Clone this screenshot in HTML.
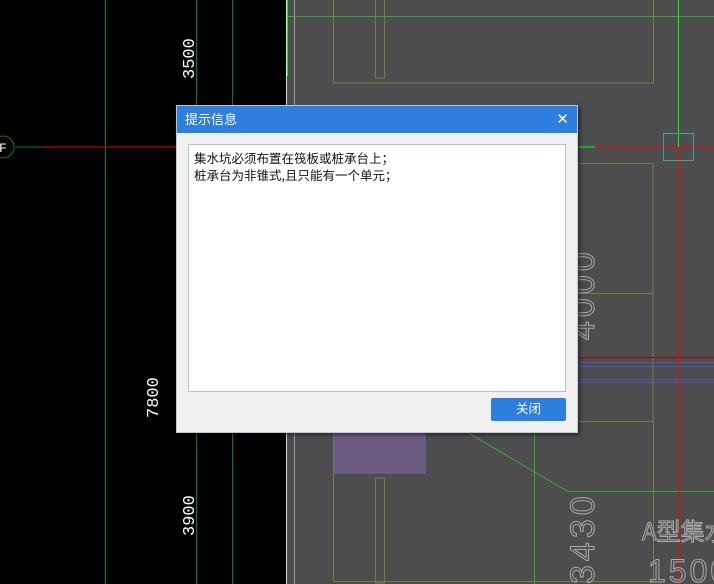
<!DOCTYPE html>
<html><head><meta charset="utf-8"><style>
html,body{margin:0;width:714px;height:584px;overflow:hidden}
body{background:#000;position:relative;font-family:"Liberation Sans","Noto Sans CJK SC",sans-serif}
svg{position:absolute;left:0;top:0}
.dlg{position:absolute;left:176px;top:105px;width:402px;height:328px;background:#f0f0f0;border:1px solid #b8c8d8;box-sizing:border-box;box-shadow:2px 2px 4px rgba(0,0,0,.5)}
.tb{height:27px;background:#2e7fdd;color:#fff;font-size:13px;line-height:27px;padding-left:8px;position:relative}
.x{position:absolute;right:8px;top:0;font-size:15px}
.ta{position:absolute;left:11px;top:38px;width:378px;height:248px;background:#fff;border:1px solid #a9c4de;box-sizing:border-box;font-size:12.5px;line-height:17px;padding:4px 5px;color:#111;font-family:"Noto Sans CJK SC",sans-serif}
.btn{position:absolute;left:314px;top:292px;width:75px;height:23px;background:#2e7fdd;color:#fff;font-size:12.5px;text-align:center;line-height:23px;border-radius:2px}
</style></head><body>
<svg width="714" height="584" viewBox="0 0 714 584" overflow="hidden">
<rect x="287" y="0" width="427" height="584" fill="#4d4d4d"/>
<line x1="286.5" y1="0" x2="286.5" y2="584" stroke="#ddd"/>
<line x1="294.5" y1="0" x2="294.5" y2="584" stroke="#999"/>
<line x1="287.5" y1="0" x2="287.5" y2="76" stroke="#0f0"/>
<g stroke="#080" fill="none">
<line x1="105.5" y1="0" x2="105.5" y2="584"/><line x1="196.5" y1="0" x2="196.5" y2="584"/><line x1="232.5" y1="0" x2="232.5" y2="584"/>
<line x1="15" y1="147" x2="43" y2="147"/><circle cx="3" cy="147" r="11"/>
</g>
<line x1="43" y1="147" x2="176" y2="147" stroke="#f00"/>
<g stroke="#7a7a48" fill="none">
<rect x="333.5" y="-1" width="320" height="84"/><rect x="375.5" y="-1" width="9" height="79"/>
<rect x="578" y="163.5" width="75" height="130"/><rect x="578" y="293.5" width="75" height="128"/>
<rect x="333.5" y="421.5" width="320" height="160"/><rect x="375.5" y="427" width="9" height="38"/><rect x="375.5" y="478" width="9" height="105"/>
</g>
<rect x="334" y="433" width="91" height="40" fill="#6a5a80" stroke="#7060a0"/>
<line x1="287" y1="16.5" x2="714" y2="16.5" stroke="#3a3"/>
<line x1="534.5" y1="387" x2="534.5" y2="584" stroke="#3a3"/>
<line x1="392" y1="388" x2="567" y2="491" stroke="#3a3"/>
<line x1="567" y1="491.5" x2="714" y2="491.5" stroke="#3a3"/>
<line x1="578" y1="357.5" x2="714" y2="357.5" stroke="#a00"/>
<g stroke="#5050c0"><line x1="578" y1="362.5" x2="714" y2="362.5"/><line x1="578" y1="366.5" x2="714" y2="366.5"/><line x1="578" y1="379.5" x2="714" y2="379.5"/><line x1="578" y1="382.5" x2="714" y2="382.5"/></g>
<line x1="578" y1="147" x2="595" y2="147" stroke="#0f0"/>
<line x1="595" y1="147" x2="714" y2="147" stroke="#f00"/>
<line x1="678.5" y1="0" x2="678.5" y2="147" stroke="#0f0"/>
<line x1="678.5" y1="147" x2="678.5" y2="584" stroke="#f00"/>
<rect x="663.5" y="133.5" width="30" height="27" fill="none" stroke="#4a9a9a"/>
<g fill="#fff" font-size="17" font-family="Liberation Mono,monospace">
<text transform="translate(194,79) rotate(-90)">3500</text>
<text transform="translate(158,418) rotate(-90)">7800</text>
<text transform="translate(194,536) rotate(-90)">3900</text>
<text x="-1" y="152" font-size="13">F</text>
</g>
<g fill="none" stroke="#aaa" stroke-width="1" font-family="Liberation Sans,sans-serif">
<text transform="translate(594,340) rotate(-90)" font-size="34" letter-spacing="4">4000</text>
<text transform="translate(594,584) rotate(-90)" font-size="34" letter-spacing="4">3430</text>
<text x="642" y="540" font-size="24" font-family="Noto Sans CJK SC,sans-serif">A型集水</text>
<text x="648" y="582" font-size="32" letter-spacing="3">1500</text>
</g>
</svg>
<div class="dlg">
<div class="tb">提示信息<span class="x">✕</span></div>
<div class="ta">集水坑必须布置在筏板或桩承台上；<br>桩承台为非锥式,且只能有一个单元；</div>
<div class="btn">关闭</div>
</div>
</body></html>
